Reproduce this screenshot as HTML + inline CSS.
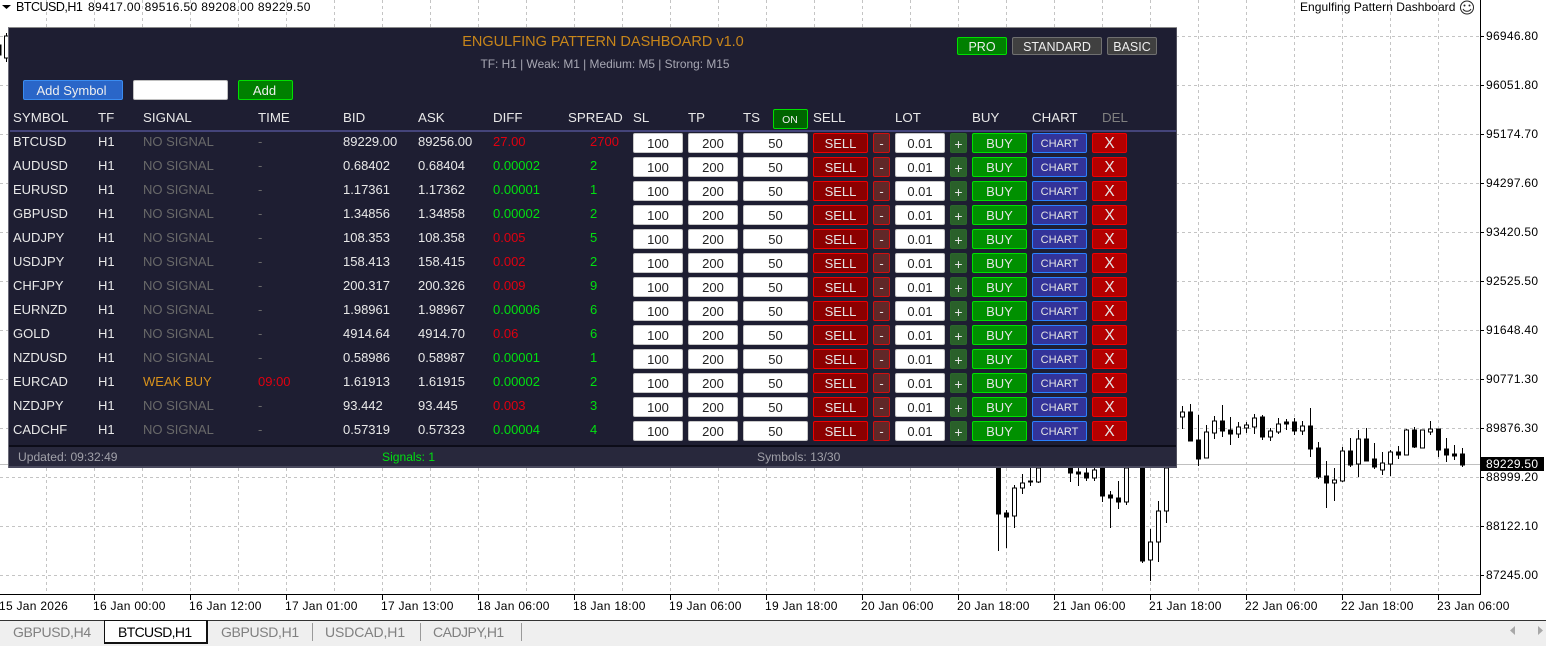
<!DOCTYPE html>
<html><head><meta charset="utf-8"><title>Engulfing Pattern Dashboard</title>
<style>
html,body{margin:0;padding:0;background:#fff}
#p{position:relative;width:1546px;height:646px;overflow:hidden;background:#fff;font-family:"Liberation Sans",sans-serif}
#p svg.c{position:absolute;left:0;top:0}
.t{position:absolute;white-space:nowrap;font-size:12px;line-height:14px;color:#000;letter-spacing:.28px}
.y{left:1486px}
.x{top:599px}
.panel{position:absolute;left:8px;top:27px;width:1169px;height:441px;background:#1e1e32;border-top:1px solid #8a8a8a;border-left:1px solid #6a6a78;box-sizing:border-box}
.abs{position:absolute;white-space:nowrap}
.hd{position:absolute;top:109px;font-size:13.3px;line-height:17px;color:#e8e8e8;white-space:nowrap}
.r{position:absolute;left:0;width:1177px;height:24px;font-size:13px;color:#e8e8e8}
.r i,.r u,.r s{position:absolute;font-style:normal;text-decoration:none;white-space:nowrap}
.r i{top:2px;line-height:17px}
.r u,.r s{top:2px;height:20px;line-height:19px;text-align:center;box-sizing:border-box;border-radius:2px}
.r u{background:#fff;color:#222;border:1px solid #c8c8c8}
.r s{border:1px solid;color:#e4e4e4;font-size:13px;line-height:20px}
.a{left:13px}.b{left:98px}.cc{left:143px}.d{left:258px}.e{left:343px}.g1{left:418px}.h{left:493px}.j{left:590px}
.G{color:#696969}.R{color:#e00010}.L{color:#00e010}.O{color:#d8921c}
.sl{left:633px;width:50px}.tp{left:688px;width:50px}.ts{left:743px;width:65px}.lo{left:895px;width:50px}
.r s.se{left:813px;width:55px;background:#8b0000;border-color:#f00000}
.r s.mi{left:873px;width:17px;background:#602828;border-color:#d01010}
.r s.pl{left:950px;width:17px;background:#2a602a;border-color:#2a682a;font-size:14px}
.r s.bu{left:972px;width:55px;background:#009000;border-color:#00e000;font-size:13px}
.r s.ch{left:1032px;width:55px;background:#333399;border-color:#2a80ff;font-size:11px}
.r s.xx{left:1092px;width:35px;background:#b40000;border-color:#f00000;font-size:15.500px}
.btn{position:absolute;box-sizing:border-box;border:1px solid;border-radius:2px;text-align:center;color:#eee;white-space:nowrap}
.tab{position:absolute;top:624px;font-size:14px;line-height:17px;color:#808080;white-space:nowrap;letter-spacing:-.35px}
.sep{position:absolute;top:623px;width:1px;height:18px;background:#9a9a9a}
</style></head><body>
<div id="p">
<svg class="c" width="1546" height="646" viewBox="0 0 1546 646">
<g stroke="#c4c4c4" stroke-width="1" stroke-dasharray="3 3" fill="none" shape-rendering="crispEdges">
<path d="M0 36.5H1480M0 85.5H1480M0 134.5H1480M0 183.5H1480M0 232.5H1480M0 281.5H1480M0 330.5H1480M0 379.5H1480M0 428.5H1480M0 477.5H1480M0 526.5H1480M0 575.5H1480"/>
<path d="M46.5 0V594M94.5 0V594M142.5 0V594M190.5 0V594M238.5 0V594M286.5 0V594M334.5 0V594M382.5 0V594M430.5 0V594M478.5 0V594M526.5 0V594M574.5 0V594M622.5 0V594M670.5 0V594M718.5 0V594M766.5 0V594M814.5 0V594M862.5 0V594M910.5 0V594M958.5 0V594M1006.5 0V594M1054.5 0V594M1102.5 0V594M1150.5 0V594M1198.5 0V594M1246.5 0V594M1294.5 0V594M1342.5 0V594M1390.5 0V594M1438.5 0V594"/>
</g>
<path d="M0 464.5H1480" stroke="#c0c0c0" stroke-width="1" shape-rendering="crispEdges"/>
<g stroke="#000" stroke-width="1" shape-rendering="crispEdges">
<path fill="none" d="M998.5 468V551M1006.5 510V548M1014.5 485V528M1022.5 474V494M1030.5 468V486M1038.5 468V483M1070.5 468V482M1078.5 468V486M1086.5 468V481M1094.5 468V481M1102.5 468V502M1110.5 491V528M1118.5 481V509M1126.5 468V505M1142.5 468V563M1150.5 529V581M1158.5 501V562M1166.5 468V523M1182.5 406V429M1190.5 404V441M1198.5 415V466M1206.5 425V458M1214.5 416V439M1222.5 405V437M1230.5 417V445M1238.5 422V438M1246.5 422V433M1254.5 414V434M1262.5 415V440M1270.5 428V441M1278.5 418V434M1286.5 419V430M1294.5 418V435M1302.5 421V435M1310.5 408V457M1318.5 442V479M1326.5 461V508M1334.5 468V501M1342.5 447V482M1350.5 438V467M1358.5 430V477M1366.5 428V461M1374.5 443V469M1382.5 452V475M1390.5 450V476M1398.5 446V459M1406.5 429V455M1414.5 427V448M1422.5 430V448M1430.5 421V435M1438.5 429V457M1446.5 438V462M1454.5 445V460M1462.5 448V467M6.5 33V62"/>
<g fill="#000">
<rect x="996.5" y="468" width="4" height="46"/><rect x="1004.5" y="513" width="4" height="4"/><rect x="1028.5" y="481" width="4" height="1"/><rect x="1068.5" y="468" width="4" height="5"/><rect x="1076.5" y="472" width="4" height="2"/><rect x="1084.5" y="473" width="4" height="5"/><rect x="1100.5" y="468" width="4" height="28"/><rect x="1108.5" y="495" width="4" height="3"/><rect x="1116.5" y="498" width="4" height="4"/><rect x="1140.5" y="468" width="4" height="93"/><rect x="1188.5" y="412" width="4" height="29"/><rect x="1196.5" y="440" width="4" height="19"/><rect x="1220.5" y="421" width="4" height="10"/><rect x="1228.5" y="430" width="4" height="4"/><rect x="1260.5" y="417" width="4" height="20"/><rect x="1284.5" y="422" width="4" height="2"/><rect x="1292.5" y="422" width="4" height="9"/><rect x="1308.5" y="426" width="4" height="23"/><rect x="1316.5" y="448" width="4" height="29"/><rect x="1324.5" y="476" width="4" height="7"/><rect x="1348.5" y="451" width="4" height="14"/><rect x="1364.5" y="439" width="4" height="22"/><rect x="1372.5" y="459" width="4" height="8"/><rect x="1396.5" y="452" width="4" height="3"/><rect x="1412.5" y="430" width="4" height="17"/><rect x="1436.5" y="429" width="4" height="21"/><rect x="1444.5" y="449" width="4" height="6"/><rect x="1452.5" y="454" width="4" height="2"/><rect x="1460.5" y="454" width="4" height="11"/><rect x="-3" y="45" width="4" height="10"/>
</g>
<g fill="#fff">
<rect x="1012.5" y="488" width="4" height="28"/><rect x="1020.5" y="483" width="4" height="5"/><rect x="1036.5" y="468" width="4" height="14"/><rect x="1092.5" y="470" width="4" height="8"/><rect x="1124.5" y="468" width="4" height="34"/><rect x="1148.5" y="542" width="4" height="18"/><rect x="1156.5" y="511" width="4" height="31"/><rect x="1164.5" y="468" width="4" height="43"/><rect x="1180.5" y="412" width="4" height="5"/><rect x="1204.5" y="432" width="4" height="26"/><rect x="1212.5" y="421" width="4" height="12"/><rect x="1236.5" y="427" width="4" height="7"/><rect x="1244.5" y="425" width="4" height="3"/><rect x="1252.5" y="418" width="4" height="9"/><rect x="1268.5" y="431" width="4" height="6"/><rect x="1276.5" y="424" width="4" height="8"/><rect x="1300.5" y="426" width="4" height="5"/><rect x="1332.5" y="480" width="4" height="3"/><rect x="1340.5" y="451" width="4" height="30"/><rect x="1356.5" y="439" width="4" height="25"/><rect x="1380.5" y="463" width="4" height="7"/><rect x="1388.5" y="452" width="4" height="12"/><rect x="1404.5" y="430" width="4" height="25"/><rect x="1420.5" y="430" width="4" height="18"/><rect x="1428.5" y="429" width="4" height="3"/><rect x="4.5" y="36" width="4" height="22"/>
</g>
</g>
<g stroke="#000" stroke-width="1" fill="none" shape-rendering="crispEdges">
<path d="M1480.5 0V594.5H0"/>
<path d="M1480 36.5h4M1480 85.5h4M1480 134.5h4M1480 183.5h4M1480 232.5h4M1480 281.5h4M1480 330.5h4M1480 379.5h4M1480 428.5h4M1480 477.5h4M1480 526.5h4M1480 575.5h4"/>
<path d="M94.5 594v6M190.5 594v6M286.5 594v6M382.5 594v6M478.5 594v6M574.5 594v6M670.5 594v6M766.5 594v6M862.5 594v6M958.5 594v6M1054.5 594v6M1150.5 594v6M1246.5 594v6M1342.5 594v6M1438.5 594v6"/>
</g>
<rect x="1481" y="457" width="63" height="14" fill="#000"/>
<path d="M2 5h9l-4.500 4z" fill="#000"/>
<circle cx="1467" cy="7.500" r="6.500" fill="#fff" stroke="#222" stroke-width="1"/>
<circle cx="1464.500" cy="5.500" r="1" fill="#222"/><circle cx="1469.500" cy="5.500" r="1" fill="#222"/>
<path d="M1463 9c1.500 3 6.500 3 8 0" fill="none" stroke="#222"/>
</svg>

<div class="t" style="left:16px;top:0px;letter-spacing:-.5px;font-size:12.500px">BTCUSD,H1</div>
<div class="t" style="left:88px;top:0px;letter-spacing:.36px">89417.00 89516.50 89208.00 89229.50</div>
<div class="t" style="left:1300px;top:0px;letter-spacing:.05px">Engulfing Pattern Dashboard</div>

<div class="t y" style="top:29px">96946.80</div><div class="t y" style="top:78px">96051.80</div><div class="t y" style="top:127px">95174.70</div><div class="t y" style="top:176px">94297.60</div><div class="t y" style="top:225px">93420.50</div><div class="t y" style="top:274px">92525.50</div><div class="t y" style="top:323px">91648.40</div><div class="t y" style="top:372px">90771.30</div><div class="t y" style="top:421px">89876.30</div><div class="t y" style="top:470px">88999.20</div><div class="t y" style="top:519px">88122.10</div><div class="t y" style="top:568px">87245.00</div>
<div class="t y" style="top:457px;color:#fff">89229.50</div>

<div class="t x" style="left:-1px">15 Jan 2026</div><div class="t x" style="left:93px">16 Jan 00:00</div><div class="t x" style="left:189px">16 Jan 12:00</div><div class="t x" style="left:285px">17 Jan 01:00</div><div class="t x" style="left:381px">17 Jan 13:00</div><div class="t x" style="left:477px">18 Jan 06:00</div><div class="t x" style="left:573px">18 Jan 18:00</div><div class="t x" style="left:669px">19 Jan 06:00</div><div class="t x" style="left:765px">19 Jan 18:00</div><div class="t x" style="left:861px">20 Jan 06:00</div><div class="t x" style="left:957px">20 Jan 18:00</div><div class="t x" style="left:1053px">21 Jan 06:00</div><div class="t x" style="left:1149px">21 Jan 18:00</div><div class="t x" style="left:1245px">22 Jan 06:00</div><div class="t x" style="left:1341px">22 Jan 18:00</div><div class="t x" style="left:1437px">23 Jan 06:00</div>

<div class="abs" style="left:0;top:620px;width:1546px;height:26px;background:#efefef;border-top:1px solid #333;box-sizing:border-box"></div>
<div class="abs" style="left:104px;top:620px;width:104px;height:24px;background:#fff;border:1px solid #111;border-bottom:2px solid #111;border-right:2px solid #111;box-sizing:border-box"></div>
<div class="tab" style="left:13px">GBPUSD,H4</div>
<div class="tab" style="left:118px;color:#000;letter-spacing:-.65px">BTCUSD,H1</div>
<div class="tab" style="left:221px">GBPUSD,H1</div><div class="sep" style="left:312px"></div>
<div class="tab" style="left:325px;letter-spacing:-.1px">USDCAD,H1</div><div class="sep" style="left:420px"></div>
<div class="tab" style="left:433px;letter-spacing:-.5px">CADJPY,H1</div><div class="sep" style="left:521px"></div>
<svg class="c" width="1546" height="646" style="pointer-events:none"><path d="M1515 626v9l-5-4.500z" fill="#a8a8a8"/><path d="M1538 626v9l5-4.500z" fill="#a8a8a8"/></svg>

<div class="panel"></div>
<div class="abs" style="left:9px;top:445px;width:1168px;height:23px;background:#28283c;border-top:2px solid #0c0c18;border-bottom:2px solid #4a4a5e;box-sizing:border-box"></div>
<div class="abs" style="left:1176px;top:28px;width:1px;height:440px;background:#50505e"></div>
<div class="abs" style="left:10px;top:130px;width:1166px;height:2px;background:#44447a"></div>

<div class="abs" style="left:403px;width:400px;text-align:center;top:34px;font-size:14.500px;line-height:17px;color:#c8861a">ENGULFING PATTERN DASHBOARD v1.0</div>
<div class="abs" style="left:405px;width:400px;text-align:center;top:57px;font-size:11.900px;line-height:14px;color:#a8a8b4">TF: H1 | Weak: M1 | Medium: M5 | Strong: M15</div>

<div class="btn" style="left:957px;top:37px;width:50px;height:18px;background:#008000;border-color:#00e000;font-size:12.500px;line-height:18px">PRO</div>
<div class="btn" style="left:1012px;top:37px;width:90px;height:18px;background:#404040;border-color:#707070;font-size:12.500px;line-height:18px">STANDARD</div>
<div class="btn" style="left:1107px;top:37px;width:50px;height:18px;background:#404040;border-color:#707070;font-size:12.500px;line-height:18px">BASIC</div>

<div class="btn" style="left:23px;top:80px;width:100px;height:20px;background:#2a66c8;border-color:#3a8cf0;font-size:13px;line-height:19px;padding-right:3px">Add Symbol</div>
<div class="btn" style="left:133px;top:80px;width:95px;height:20px;background:#fff;border-color:#c0c0c0"></div>
<div class="btn" style="left:238px;top:80px;width:55px;height:20px;background:#008000;border-color:#00e000;font-size:13px;line-height:19px;padding-right:2px">Add</div>
<div class="btn" style="left:773px;top:109px;width:35px;height:20px;background:#006400;border-color:#00e000;font-size:10.500px;line-height:20px;padding-right:1px">ON</div>

<div class="hd" style="left:13px">SYMBOL</div><div class="hd" style="left:98px">TF</div><div class="hd" style="left:143px">SIGNAL</div><div class="hd" style="left:258px">TIME</div><div class="hd" style="left:343px">BID</div><div class="hd" style="left:418px">ASK</div><div class="hd" style="left:493px">DIFF</div><div class="hd" style="left:568px">SPREAD</div><div class="hd" style="left:633px">SL</div><div class="hd" style="left:688px">TP</div><div class="hd" style="left:743px">TS</div><div class="hd" style="left:813px">SELL</div><div class="hd" style="left:895px">LOT</div><div class="hd" style="left:972px">BUY</div><div class="hd" style="left:1032px">CHART</div><div class="hd" style="left:1102px;color:#808080">DEL</div>

<div class="r" style="top:131px"><i class="a">BTCUSD</i><i class="b">H1</i><i class="cc G">NO SIGNAL</i><i class="d G">-</i><i class="e">89229.00</i><i class="g1">89256.00</i><i class="h R">27.00</i><i class="j R">2700</i><u class="sl">100</u><u class="tp">200</u><u class="ts">50</u><s class="se">SELL</s><s class="mi">-</s><u class="lo">0.01</u><s class="pl">+</s><s class="bu">BUY</s><s class="ch">CHART</s><s class="xx">X</s></div>
<div class="r" style="top:155px"><i class="a">AUDUSD</i><i class="b">H1</i><i class="cc G">NO SIGNAL</i><i class="d G">-</i><i class="e">0.68402</i><i class="g1">0.68404</i><i class="h L">0.00002</i><i class="j L">2</i><u class="sl">100</u><u class="tp">200</u><u class="ts">50</u><s class="se">SELL</s><s class="mi">-</s><u class="lo">0.01</u><s class="pl">+</s><s class="bu">BUY</s><s class="ch">CHART</s><s class="xx">X</s></div>
<div class="r" style="top:179px"><i class="a">EURUSD</i><i class="b">H1</i><i class="cc G">NO SIGNAL</i><i class="d G">-</i><i class="e">1.17361</i><i class="g1">1.17362</i><i class="h L">0.00001</i><i class="j L">1</i><u class="sl">100</u><u class="tp">200</u><u class="ts">50</u><s class="se">SELL</s><s class="mi">-</s><u class="lo">0.01</u><s class="pl">+</s><s class="bu">BUY</s><s class="ch">CHART</s><s class="xx">X</s></div>
<div class="r" style="top:203px"><i class="a">GBPUSD</i><i class="b">H1</i><i class="cc G">NO SIGNAL</i><i class="d G">-</i><i class="e">1.34856</i><i class="g1">1.34858</i><i class="h L">0.00002</i><i class="j L">2</i><u class="sl">100</u><u class="tp">200</u><u class="ts">50</u><s class="se">SELL</s><s class="mi">-</s><u class="lo">0.01</u><s class="pl">+</s><s class="bu">BUY</s><s class="ch">CHART</s><s class="xx">X</s></div>
<div class="r" style="top:227px"><i class="a">AUDJPY</i><i class="b">H1</i><i class="cc G">NO SIGNAL</i><i class="d G">-</i><i class="e">108.353</i><i class="g1">108.358</i><i class="h R">0.005</i><i class="j L">5</i><u class="sl">100</u><u class="tp">200</u><u class="ts">50</u><s class="se">SELL</s><s class="mi">-</s><u class="lo">0.01</u><s class="pl">+</s><s class="bu">BUY</s><s class="ch">CHART</s><s class="xx">X</s></div>
<div class="r" style="top:251px"><i class="a">USDJPY</i><i class="b">H1</i><i class="cc G">NO SIGNAL</i><i class="d G">-</i><i class="e">158.413</i><i class="g1">158.415</i><i class="h R">0.002</i><i class="j L">2</i><u class="sl">100</u><u class="tp">200</u><u class="ts">50</u><s class="se">SELL</s><s class="mi">-</s><u class="lo">0.01</u><s class="pl">+</s><s class="bu">BUY</s><s class="ch">CHART</s><s class="xx">X</s></div>
<div class="r" style="top:275px"><i class="a">CHFJPY</i><i class="b">H1</i><i class="cc G">NO SIGNAL</i><i class="d G">-</i><i class="e">200.317</i><i class="g1">200.326</i><i class="h R">0.009</i><i class="j L">9</i><u class="sl">100</u><u class="tp">200</u><u class="ts">50</u><s class="se">SELL</s><s class="mi">-</s><u class="lo">0.01</u><s class="pl">+</s><s class="bu">BUY</s><s class="ch">CHART</s><s class="xx">X</s></div>
<div class="r" style="top:299px"><i class="a">EURNZD</i><i class="b">H1</i><i class="cc G">NO SIGNAL</i><i class="d G">-</i><i class="e">1.98961</i><i class="g1">1.98967</i><i class="h L">0.00006</i><i class="j L">6</i><u class="sl">100</u><u class="tp">200</u><u class="ts">50</u><s class="se">SELL</s><s class="mi">-</s><u class="lo">0.01</u><s class="pl">+</s><s class="bu">BUY</s><s class="ch">CHART</s><s class="xx">X</s></div>
<div class="r" style="top:323px"><i class="a">GOLD</i><i class="b">H1</i><i class="cc G">NO SIGNAL</i><i class="d G">-</i><i class="e">4914.64</i><i class="g1">4914.70</i><i class="h R">0.06</i><i class="j L">6</i><u class="sl">100</u><u class="tp">200</u><u class="ts">50</u><s class="se">SELL</s><s class="mi">-</s><u class="lo">0.01</u><s class="pl">+</s><s class="bu">BUY</s><s class="ch">CHART</s><s class="xx">X</s></div>
<div class="r" style="top:347px"><i class="a">NZDUSD</i><i class="b">H1</i><i class="cc G">NO SIGNAL</i><i class="d G">-</i><i class="e">0.58986</i><i class="g1">0.58987</i><i class="h L">0.00001</i><i class="j L">1</i><u class="sl">100</u><u class="tp">200</u><u class="ts">50</u><s class="se">SELL</s><s class="mi">-</s><u class="lo">0.01</u><s class="pl">+</s><s class="bu">BUY</s><s class="ch">CHART</s><s class="xx">X</s></div>
<div class="r" style="top:371px"><i class="a">EURCAD</i><i class="b">H1</i><i class="cc O">WEAK BUY</i><i class="d R">09:00</i><i class="e">1.61913</i><i class="g1">1.61915</i><i class="h L">0.00002</i><i class="j L">2</i><u class="sl">100</u><u class="tp">200</u><u class="ts">50</u><s class="se">SELL</s><s class="mi">-</s><u class="lo">0.01</u><s class="pl">+</s><s class="bu">BUY</s><s class="ch">CHART</s><s class="xx">X</s></div>
<div class="r" style="top:395px"><i class="a">NZDJPY</i><i class="b">H1</i><i class="cc G">NO SIGNAL</i><i class="d G">-</i><i class="e">93.442</i><i class="g1">93.445</i><i class="h R">0.003</i><i class="j L">3</i><u class="sl">100</u><u class="tp">200</u><u class="ts">50</u><s class="se">SELL</s><s class="mi">-</s><u class="lo">0.01</u><s class="pl">+</s><s class="bu">BUY</s><s class="ch">CHART</s><s class="xx">X</s></div>
<div class="r" style="top:419px"><i class="a">CADCHF</i><i class="b">H1</i><i class="cc G">NO SIGNAL</i><i class="d G">-</i><i class="e">0.57319</i><i class="g1">0.57323</i><i class="h L">0.00004</i><i class="j L">4</i><u class="sl">100</u><u class="tp">200</u><u class="ts">50</u><s class="se">SELL</s><s class="mi">-</s><u class="lo">0.01</u><s class="pl">+</s><s class="bu">BUY</s><s class="ch">CHART</s><s class="xx">X</s></div>

<div class="abs" style="left:18px;top:450px;font-size:12.100px;line-height:14px;color:#a0a0a8">Updated: 09:32:49</div>
<div class="abs" style="left:382px;top:450px;font-size:12.100px;line-height:14px;color:#00e010">Signals: 1</div>
<div class="abs" style="left:757px;top:450px;font-size:12.100px;line-height:14px;color:#a0a0a8">Symbols: 13/30</div>
</div>
</body></html>
